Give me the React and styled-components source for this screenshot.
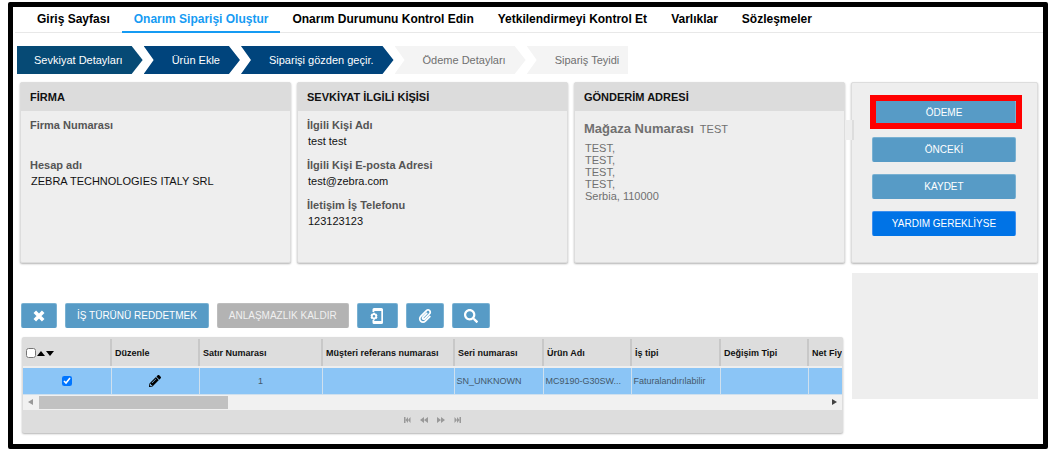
import React from "react";
import styled, { createGlobalStyle, css } from "styled-components";
import { FaPaperclip, FaSearch, FaPencilAlt } from "react-icons/fa";

const GlobalStyle = createGlobalStyle`
  * { box-sizing: border-box; }
  body {
    margin: 0;
    background: #fff;
    color: #111;
    font-family: "Liberation Sans", Arial, sans-serif;
    font-size: 11px;
    line-height: 16px;
  }
  button { font-family: inherit; cursor: pointer; }
`;

const Frame = styled.div`
  margin: 2px 8px 6px;
  border: 5px solid #000;
  border-radius: 2px;
  padding-bottom: 11px;
  overflow: hidden;
`;

const Nav = styled.nav`
  display: flex;
  height: 26px;
  margin-left: 2px;
  padding-left: 10px;
  border-bottom: 1px solid #e8e8e8;
`;

const NavLink = styled.a`
  height: 26px;
  padding: 4px 12px 0;
  border-bottom: 2px solid ${(p) => (p.$active ? "#159bf3" : "transparent")};
  color: ${(p) => (p.$active ? "#159bf3" : "#000")};
  font-size: 12px;
  font-weight: bold;
  text-decoration: none;
  white-space: nowrap;
`;

const Steps = styled.ol`
  display: flex;
  gap: 1px;
  list-style: none;
  margin: 13px 0 8px;
  padding: 0 0 0 4px;
`;

const Step = styled.li`
  height: 28px;
  line-height: 28px;
  white-space: nowrap;
  padding: 0 20px 0 28px;
  background: ${(p) => (p.$done ? "#00447c" : "#f4f4f4")};
  color: ${(p) => (p.$done ? "#fff" : "#707070")};
  clip-path: polygon(0 0, calc(100% - 11px) 0, 100% 50%, calc(100% - 11px) 100%, 0 100%, 10px 50%);
  &:first-child {
    padding-left: 17px;
    background: #064a75;
    clip-path: polygon(0 0, calc(100% - 11px) 0, 100% 50%, calc(100% - 11px) 100%, 0 100%);
  }
  &:last-child {
    padding-right: 9px;
    clip-path: polygon(0 0, 100% 0, 100% 100%, 0 100%, 10px 50%);
  }
`;

const Page = styled.main`
  display: grid;
  grid-template-columns: minmax(0, 1fr) 187px;
  gap: 6px;
  padding: 0 5px 0 7px;
`;

const Cards = styled.div`
  display: grid;
  grid-template-columns: repeat(3, minmax(0, 1fr));
  gap: 6px;
`;

const panel = css`
  background: #eee;
  border: 1px solid #ddd;
  border-radius: 2px;
  box-shadow: 0 1px 2px rgba(0, 0, 0, 0.3);
`;

const CardBox = styled.section`
  ${panel}
  min-height: 181px;
`;

const CardTitle = styled.h2`
  margin: 0;
  padding: 6px 9px;
  background: #dcdcdc;
  font-size: 11px;
  line-height: 16px;
  font-weight: bold;
  color: #111;
`;

const Fields = styled.dl`
  margin: 0;
  padding: 6px 9px;
`;

const Field = styled.div`
  min-height: 40px;
`;

const Label = styled.dt`
  font-weight: bold;
  color: #555;
`;

const Value = styled.dd`
  margin: 0 0 0 1px;
`;

const Address = styled.address`
  padding: 10px 9px;
  font-style: normal;
  color: #707070;
  line-height: 12px;
`;

const Store = styled.p`
  display: flex;
  gap: 6px;
  margin: 0 0 5px;
  line-height: 16px;
`;

const StoreLabel = styled.strong`
  font-size: 13px;
`;

const AddressLine = styled.div`
  padding-left: 1px;
`;

const Side = styled.aside`
  display: flex;
  flex-direction: column;
  gap: 10px;
`;

const Actions = styled.div`
  ${panel}
  position: relative;
  display: flex;
  flex-direction: column;
  gap: 12px;
  min-height: 181px;
  padding: 17px 21px 0 20px;
  &::before {
    content: "";
    position: absolute;
    left: -7px;
    top: 37px;
    width: 7px;
    height: 20px;
    background: #eee;
    border-right: 2px solid #ddd;
  }
`;

const Button = styled.button`
  height: 25px;
  padding: 0 11px;
  border: 1px solid ${(p) => (p.$tone === "help" ? "#3d8fee" : p.$tone === "muted" ? "#bdbdbd" : "#79b1d2")};
  border-bottom-color: transparent;
  border-radius: 2px;
  background: ${(p) => (p.$tone === "help" ? "#0073e6" : p.$tone === "muted" ? "#b3b3b3" : "#579bc6")};
  color: ${(p) => (p.$tone === "muted" ? "#f0f0f0" : "#fff")};
  font-size: 10px;
  white-space: nowrap;
`;

const Highlight = styled.div`
  position: relative;
  display: grid;
  &::after {
    content: "";
    position: absolute;
    inset: -5px -6px -4px -2px;
    border: 6px solid #f00;
    pointer-events: none;
  }
`;

const Blank = styled.div`
  height: 126px;
  margin-left: 1px;
  background: #eee;
`;

const Toolbar = styled.div`
  display: flex;
  gap: 8px;
  margin: 40px 0 9px 1px;
`;

const IconButton = styled(Button)`
  display: inline-flex;
  align-items: center;
  justify-content: center;
  width: ${(p) => p.$width}px;
  padding: 0;
`;

const Grid = styled.section`
  ${panel}
  margin: 0 2px;
  border-width: 2px 1px;
  background: #ddd;
  overflow: hidden;
`;

const Scroller = styled.div`
  overflow: hidden;
`;

const Table = styled.table`
  width: 873px;
  table-layout: fixed;
  border-collapse: collapse;
`;

const Th = styled.th`
  height: 28px;
  padding: 0 3px;
  border-right: 2px solid #c8c8c8;
  border-bottom: 2px solid #eee;
  text-align: left;
  font-size: 9px;
  font-weight: bold;
  white-space: nowrap;
`;

const Td = styled.td`
  height: 27px;
  padding: 0 2px;
  border-right: 1px solid #cfe0ee;
  border-bottom: 1px solid #cfe0ee;
  background: #8bc5f6;
  color: #44586a;
  font-size: 9px;
  text-align: ${(p) => (p.$center ? "center" : "left")};
  white-space: nowrap;
`;

const Check = styled.input`
  width: 10px;
  height: 10px;
  margin: 0;
  vertical-align: middle;
`;

const SortMark = styled.svg`
  vertical-align: middle;
  margin-left: 1px;
`;

const EditIcon = styled(FaPencilAlt)`
  color: #000;
  vertical-align: middle;
`;

const ScrollTrack = styled.div`
  display: flex;
  align-items: center;
  height: 15px;
  padding: 0 5px;
  background: #f1f1f1;
`;

const ScrollThumb = styled.div`
  width: 189px;
  height: 13px;
  margin: 0 auto 0 6px;
  background: #c1c1c1;
`;

const Pager = styled.div`
  display: flex;
  justify-content: center;
  align-items: center;
  gap: 9px;
  height: 21px;
`;

const PagerButton = styled.button`
  display: flex;
  width: 8px;
  height: 8px;
  padding: 0;
  border: 0;
  background: none;
  color: #999;
`;

const steps = [
  ["Sevkiyat Detayları", true],
  ["Ürün Ekle", true],
  ["Siparişi gözden geçir.", true],
  ["Ödeme Detayları", false],
  ["Sipariş Teyidi", false],
];

const links = [
  "Giriş Sayfası",
  "Onarım Siparişi Oluştur",
  "Onarım Durumunu Kontrol Edin",
  "Yetkilendirmeyi Kontrol Et",
  "Varlıklar",
  "Sözleşmeler",
];

const columns = [
  ["Düzenle", 88],
  ["Satır Numarası", 123],
  ["Müşteri referans numarası", 132],
  ["Seri numarası", 89],
  ["Ürün Adı", 88],
  ["İş tipi", 89],
  ["Değişim Tipi", 88],
  ["Net Fiy", 88],
];

const pagerIcons = [
  ["İlk sayfa", "M1 1h1.500v6H1zM5 1v6L2.500 4zM7.500 1v6L5 4z"],
  ["Önceki sayfa", "M4 1v6L0 4zM8 1v6L4 4z"],
  ["Sonraki sayfa", "M0 1v6l4-3zM4 1v6l4-3z"],
  ["Son sayfa", "M5.500 1H7v6H5.500zM.5 1v6L3 4zM3 1v6l2.500-3z"],
];

function Card({ title, children }) {
  return (
    <CardBox>
      <CardTitle>{title}</CardTitle>
      {children}
    </CardBox>
  );
}

function FieldList({ items }) {
  return (
    <Fields>
      {items.map(([label, value]) => (
        <Field key={label}>
          <Label>{label}</Label>
          <Value>{value}</Value>
        </Field>
      ))}
    </Fields>
  );
}

function CrossIcon() {
  return (
    <svg width="12" height="12" viewBox="0 0 12 12" stroke="#fff" strokeWidth="3.600">
      <path d="M1.800 1.800l8.400 8.400M10.200 1.800l-8.400 8.400" />
    </svg>
  );
}

function DeviceIcon() {
  return (
    <svg width="14" height="16" viewBox="0 0 14 16" fill="#fff">
      <path d="M4 0h7.500A1.500 1.500 0 0 1 13 1.500v13a1.500 1.500 0 0 1-1.500 1.500H4a1.500 1.500 0 0 1-1.500-1.500V12h1.800v1h7V3h-7v1H2.500V1.500A1.500 1.500 0 0 1 4 0z" />
      <path fillRule="evenodd" d="M3 4.800h2l.4 1 1.100-.1 1 1.700-.7.900.7.900-1 1.700-1.100-.1-.4 1H3l-.4-1-1.100.1-1-1.700.7-.9-.7-.9 1-1.700 1.100.1zM4 7a1.300 1.300 0 1 0 0 2.600A1.300 1.300 0 0 0 4 7z" />
    </svg>
  );
}

export default function App() {
  return (
    <>
      <GlobalStyle />
      <Frame>
        <Nav>
          {links.map((text, i) => (
            <NavLink key={text} href="#" $active={i === 1}>{text}</NavLink>
          ))}
        </Nav>
        <Steps>
          {steps.map(([text, done]) => (
            <Step key={text} $done={done}>{text}</Step>
          ))}
        </Steps>
        <Page>
          <div>
            <Cards>
              <Card title="FİRMA">
                <FieldList items={[["Firma Numarası", ""], ["Hesap adı", "ZEBRA TECHNOLOGIES ITALY SRL"]]} />
              </Card>
              <Card title="SEVKİYAT İLGİLİ KİŞİSİ">
                <FieldList
                  items={[
                    ["İlgili Kişi Adı", "test test"],
                    ["İlgili Kişi E-posta Adresi", "test@zebra.com"],
                    ["İletişim İş Telefonu", "123123123"],
                  ]}
                />
              </Card>
              <Card title="GÖNDERİM ADRESİ">
                <Address>
                  <Store><StoreLabel>Mağaza Numarası</StoreLabel> TEST</Store>
                  {["TEST,", "TEST,", "TEST,", "TEST,", "Serbia, 110000"].map((line, i) => (
                    <AddressLine key={i}>{line}</AddressLine>
                  ))}
                </Address>
              </Card>
            </Cards>
            <Toolbar>
              <IconButton $width={36} aria-label="Sil"><CrossIcon /></IconButton>
              <Button>İŞ TÜRÜNÜ REDDETMEK</Button>
              <Button $tone="muted">ANLAŞMAZLIK KALDIR</Button>
              <IconButton $width={41} aria-label="Cihaz ayarları"><DeviceIcon /></IconButton>
              <IconButton $width={38} aria-label="Dosya ekle"><FaPaperclip size={14} /></IconButton>
              <IconButton $width={38} aria-label="Ara"><FaSearch size={14} /></IconButton>
            </Toolbar>
            <Grid>
              <Scroller>
                <Table>
                  <colgroup>
                    <col style={{ width: 88 }} />
                    {columns.map(([name, width]) => <col key={name} style={{ width }} />)}
                  </colgroup>
                  <thead>
                    <tr>
                      <Th>
                        <Check type="checkbox" aria-label="Tümünü seç" />
                        <SortMark width="17" height="5" viewBox="0 0 17 5"><path d="M0 5h8L4 0zM9 0h8l-4 5z" /></SortMark>
                      </Th>
                      {columns.map(([name]) => <Th key={name}>{name}</Th>)}
                    </tr>
                  </thead>
                  <tbody>
                    <tr>
                      <Td $center><Check type="checkbox" defaultChecked aria-label="Satırı seç" /></Td>
                      <Td $center><EditIcon size={12} aria-label="Düzenle" /></Td>
                      <Td $center>1</Td>
                      <Td />
                      <Td>SN_UNKNOWN</Td>
                      <Td>MC9190-G30SW...</Td>
                      <Td>Faturalandırılabilir</Td>
                      <Td />
                      <Td />
                    </tr>
                  </tbody>
                </Table>
              </Scroller>
              <ScrollTrack>
                <svg width="5" height="6" viewBox="0 0 5 6" fill="#999"><path d="M5 0v6L0 3z" /></svg>
                <ScrollThumb />
                <svg width="5" height="6" viewBox="0 0 5 6" fill="#444"><path d="M0 0v6l5-3z" /></svg>
              </ScrollTrack>
              <Pager>
                {pagerIcons.map(([name, d]) => (
                  <PagerButton key={name} aria-label={name}>
                    <svg width="8" height="8" viewBox="0 0 8 8" fill="currentColor"><path d={d} /></svg>
                  </PagerButton>
                ))}
              </Pager>
            </Grid>
          </div>
          <Side>
            <Actions>
              <Highlight><Button>ÖDEME</Button></Highlight>
              <Button>ÖNCEKİ</Button>
              <Button>KAYDET</Button>
              <Button $tone="help">YARDIM GEREKLİYSE</Button>
            </Actions>
            <Blank />
          </Side>
        </Page>
      </Frame>
    </>
  );
}
